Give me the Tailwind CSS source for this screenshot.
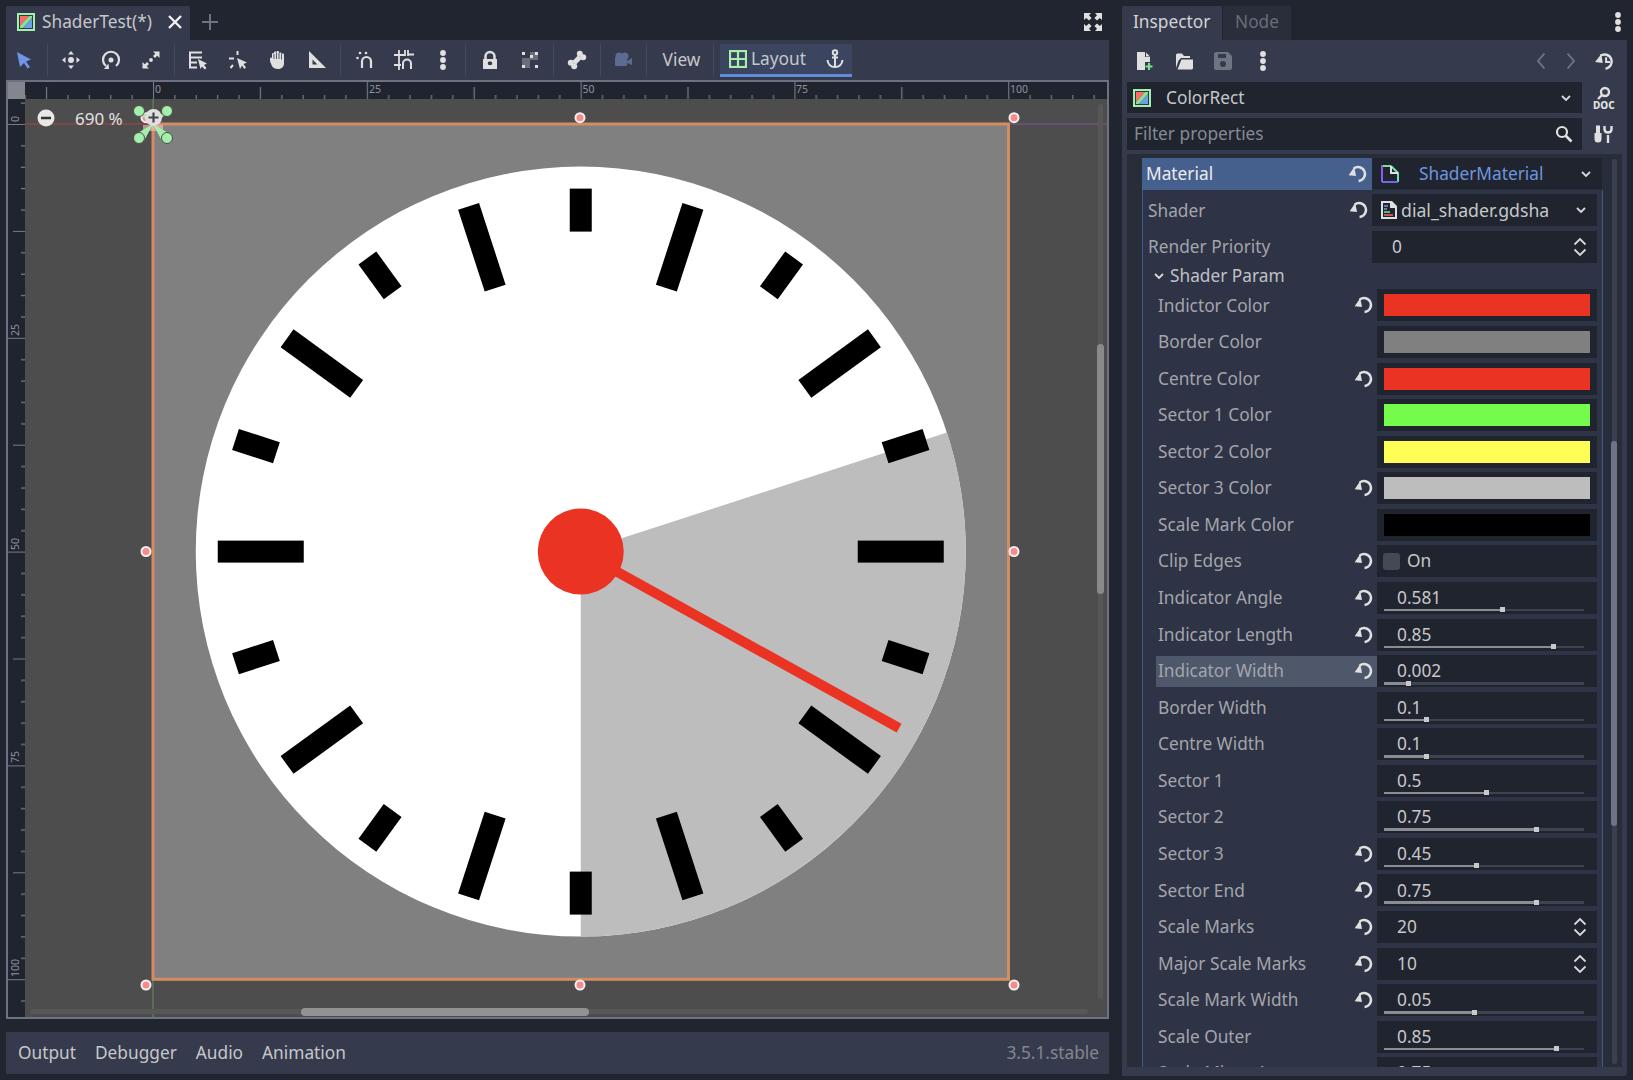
<!DOCTYPE html>
<html><head><meta charset="utf-8"><script src="https://cdn.jsdelivr.net/npm/@tailwindcss/browser@4"></script></head>
<body class="m-0">
<svg width="0" height="0" class="absolute">
<defs>
<symbol id="reset" viewBox="0 0 20 20"><path d="M6 5.200A6.300 6.300 0 1 1 10.500 16.300" fill="none" stroke="#e0e0e0" stroke-width="2.200"/><path d="M1.500 11.200L8.200 11.800L6.600 3.600Z" fill="#e0e0e0"/></symbol>
<symbol id="spin" viewBox="0 0 16 22"><path d="M2.500 8.500L8 3L13.500 8.500M2.500 13.500L8 19L13.500 13.500" fill="none" stroke="#d8d8d8" stroke-width="1.800"/></symbol>
<symbol id="chev" viewBox="0 0 12 12"><path d="M2 4L6 8L10 4" fill="none" stroke="#d8d8d8" stroke-width="1.800"/></symbol>
<symbol id="dots" viewBox="0 0 20 24"><circle cx="10" cy="5" r="2.900" fill="#e0e0e0"/><circle cx="10" cy="12" r="2.900" fill="#e0e0e0"/><circle cx="10" cy="19" r="2.900" fill="#e0e0e0"/></symbol>
<symbol id="crect" viewBox="0 0 18 18"><rect x="1" y="1" width="16" height="16" fill="#2b3a3a" stroke="#a5efac" stroke-width="2"/><path d="M3 3H12L3 13Z" fill="#ff6b6b"/><path d="M12 3H15V5L6 15H3V13Z" fill="#8de08d"/><path d="M15 5V15H6Z" fill="#6ea0e8"/></symbol>
</defs>
</svg>
<div class="relative flex w-[1633px] h-[1080px] overflow-hidden bg-[#21252f] font-['Noto_Sans',sans-serif] text-[17.3px] text-[#c6c7ca]">

<!-- LEFT -->
<div class="ml-[6px] mt-[6px] flex w-[1103px] flex-col">
  <div class="flex h-[34px] items-center">
    <div class="flex h-full w-[184px] items-center rounded-t-[2px] bg-[#353a4d] pb-[3px] pl-[11px]">
      <svg width="18" height="18"><use href="#crect"/></svg>
      <span class="ml-[7px] w-[116px]">ShaderTest(*)</span>
      <svg width="16" height="16" viewBox="0 0 16 16" class="ml-[9px]"><path d="M2 2L14 14M14 2L2 14" stroke="#f0f0f0" stroke-width="2.400"/></svg>
    </div>
    <svg width="18" height="18" viewBox="0 0 18 18" class="mb-[3px] ml-[11px]"><path d="M9 1V17M1 9H17" stroke="#6e7382" stroke-width="2"/></svg>
    <svg width="20" height="20" viewBox="0 0 20 20" class="mb-[3px] ml-auto mr-[6px]"><path d="M1 1H8L6 3.200L8.600 6L6 8.600L3.200 6L1 8ZM19 1H12L14 3.200L11.400 6L14 8.600L16.800 6L19 8ZM1 19H8L6 16.800L8.600 14L6 11.400L3.200 14L1 12ZM19 19H12L14 16.800L11.400 14L14 11.400L16.800 14L19 12Z" fill="#e0e0e0"/></svg>
  </div>
  <!-- toolbar -->
  <div class="flex h-[40px] items-center bg-[#353a4d] text-[#c6c7ca]">
    <div class="flex w-[36px] justify-center"><svg width="20" height="20" viewBox="0 0 20 20"><path d="M3 2L17 9.500L12 11.500L16 17L13.500 18.500L10 13L6 17Z" fill="#6e95e8"/></svg></div>
    <div class="ml-[5px] mr-[3px] h-[32px] w-px bg-[#454b5e]"></div>
    <div class="flex w-[40px] justify-center"><svg width="20" height="20" viewBox="0 0 20 20" fill="#e0e0e0"><path d="M10 1L13 4.500H7ZM10 19L13 15.500H7ZM1 10L4.500 7V13ZM19 10L15.500 7V13Z"/><circle cx="10" cy="10" r="3"/></svg></div>
    <div class="flex w-[40px] justify-center"><svg width="20" height="20" viewBox="0 0 20 20"><path d="M5 16A8 8 0 1 1 15 16" fill="none" stroke="#e0e0e0" stroke-width="2.200"/><circle cx="10" cy="10" r="2.500" fill="#e0e0e0"/><path d="M3 19L8 19L7.500 13.500Z" fill="#e0e0e0"/></svg></div>
    <div class="flex w-[40px] justify-center"><svg width="20" height="20" viewBox="0 0 20 20" fill="#e0e0e0"><path d="M12 1.500H18.500V8L16.200 5.700L14 8L12 6L14.300 3.800Z"/><path d="M8 18.500H1.500V12L3.800 14.300L6 12L8 14L5.700 16.200Z"/><circle cx="10" cy="10" r="1.900"/></svg></div>
    <div class="mx-[3px] h-[32px] w-px bg-[#454b5e]"></div>
    <div class="flex w-[39.750px] justify-center"><svg width="20" height="20" viewBox="0 0 20 20" fill="none" stroke="#e0e0e0" stroke-width="2"><path d="M14 2.500H2V17.500H9M2 7.500H14M2 12.500H9"/><path d="M10 9L19 13.500L16 15L18.500 18L16.800 19.500L14 16.500L12.500 19Z" fill="#e0e0e0" stroke="none"/></svg></div>
    <div class="flex w-[39.750px] justify-center"><svg width="20" height="20" viewBox="0 0 20 20" fill="none" stroke="#e0e0e0" stroke-width="2"><path d="M1 8.500H6M9.500 1V5M5 15L2.500 18"/><path d="M9 8L19 12.500L15.500 14L18 17.500L16.300 19L14 15.500L12 19Z" fill="#e0e0e0" stroke="none"/></svg></div>
    <div class="flex w-[39.750px] justify-center"><svg width="20" height="20" viewBox="0 0 20 20"><path d="M3 11V8.500C3 7 5 7 5 8.500V4C5 2.500 7 2.500 7 4V2.500C7 1 9.500 1 9.500 2.500V2C9.500 .5 12 .5 12 2V3.500C12 2 14.500 2 14.500 3.500V4.500C14.500 3 17 3 17 4.500V13C17 16.500 15 19 11 19C6 19 4.500 16 3 11Z" fill="#e0e0e0"/><path d="M7 4V9M9.500 2.500V9M12 3V9M14.500 4V9.500" stroke="#353a4d" stroke-width=".8"/></svg></div>
    <div class="flex w-[39.750px] justify-center"><svg width="20" height="20" viewBox="0 0 20 20"><path fill-rule="evenodd" d="M2 1L19 18H2ZM5.500 9.500V14.500H10.500Z" fill="#e0e0e0"/></svg></div>
    <div class="mx-[3px] h-[32px] w-px bg-[#454b5e]"></div>
    <div class="ml-[1px] flex w-[39px] justify-center"><svg width="20" height="20" viewBox="0 0 20 20" fill="none" stroke="#e0e0e0" stroke-width="2.200"><path d="M7 18V11.500A4.500 4.500 0 0 1 16 11.500V18"/><circle cx="2.500" cy="8" r="1.300" fill="#e0e0e0" stroke="none"/><circle cx="5" cy="3" r="1.300" fill="#e0e0e0" stroke="none"/><circle cx="11" cy="3" r="1.300" fill="#e0e0e0" stroke="none"/></svg></div>
    <div class="flex w-[39px] justify-center"><svg width="22" height="22" viewBox="0 0 22 22" fill="none" stroke="#e0e0e0" stroke-width="1.800"><path d="M1 6H12M1 16H8M6 1V21M12 1V7"/><path d="M10 20V14.500A4 4 0 0 1 18 14.500V20" stroke-width="2"/><path d="M15 1V7M15 5.500H21"/></svg></div>
    <div class="flex w-[39px] justify-center"><svg width="20" height="24"><use href="#dots"/></svg></div>
    <div class="mx-[3px] h-[32px] w-px bg-[#454b5e]"></div>
    <div class="ml-[1px] flex w-[40px] justify-center"><svg width="20" height="20" viewBox="0 0 20 20"><path d="M5.500 9V6.500A4.500 4.500 0 0 1 14.500 6.500V9" fill="none" stroke="#e0e0e0" stroke-width="2.500"/><path fill-rule="evenodd" d="M3 9H17V19H3ZM10 11.500A1.800 1.800 0 1 0 10 15A1.800 1.800 0 1 0 10 11.500Z" fill="#e0e0e0"/></svg></div>
    <div class="flex w-[40px] justify-center"><svg width="20" height="20" viewBox="0 0 20 20"><path d="M2 8H10V2H18V10H10V18H2Z" fill="#696e7c"/><path d="M2 2H5V5H2ZM15 15H18V18H15ZM2 15H5V18H2ZM15 2H18V5H15ZM10 5H13V8H10Z" fill="#e0e0e0"/></svg></div>
    <div class="mx-[3px] h-[32px] w-px bg-[#454b5e]"></div>
    <div class="flex w-[40px] justify-center"><svg width="20" height="20" viewBox="0 0 20 20"><path d="M13 7L7 13" stroke="#e0e0e0" stroke-width="5"/><circle cx="12.800" cy="3.800" r="3" fill="#e0e0e0"/><circle cx="16.200" cy="7.200" r="3" fill="#e0e0e0"/><circle cx="3.800" cy="12.800" r="3" fill="#e0e0e0"/><circle cx="7.200" cy="16.200" r="3" fill="#e0e0e0"/></svg></div>
    <div class="mx-[3px] h-[32px] w-px bg-[#454b5e]"></div>
    <div class="ml-[-1px] flex w-[40px] justify-center"><svg width="20" height="20" viewBox="0 0 20 20" fill="#5d6b92"><circle cx="6.500" cy="6.500" r="4"/><circle cx="12" cy="6" r="3.500"/><rect x="2" y="7" width="12" height="9" rx="1"/><path d="M14 11L19 8V15L14 13Z"/></svg></div>
    <div class="mx-[3px] h-[32px] w-px bg-[#454b5e]"></div>
    <div class="flex w-[63px] justify-center">View</div>
    <div class="h-[32px] w-px bg-[#454b5e]"></div>
    <div class="ml-[6px] flex h-[33px] w-[132px] items-center border-b-[3px] border-[#5f8ddb] bg-[#3c4560] pl-[9px]">
      <svg width="18" height="18" viewBox="0 0 18 18" fill="none" stroke="#a5efac" stroke-width="2.200"><rect x="1" y="1" width="16" height="16"/><path d="M1 9H17M9 1V17"/></svg>
      <span class="ml-[4px]">Layout</span>
      <svg width="18" height="20" viewBox="0 0 18 20" class="ml-[20px]" fill="none" stroke="#e0e0e0" stroke-width="2"><circle cx="9" cy="3.500" r="2.200"/><path d="M9 6V18M1.500 11C2 15.500 5 18 9 18C13 18 16 15.500 16.500 11M6 8.500H12"/></svg>
    </div>
  </div>
  <!-- viewport -->
  <div class="grid h-[939px] grid-cols-[17px_1fr] grid-rows-[17px_1fr] border-2 border-[#6d7282] bg-[#4d4d4d]">
    <div class="bg-[#83868e]"></div>
    <svg width="1082" height="17" viewBox="25 82 1082 17" class="bg-[#20242f]">
      <defs><pattern id="hr" patternUnits="userSpaceOnUse" x="153" y="82" width="213.800" height="17">
        <path d="M.5 0V17M107.400 5V17M21.880 13V17M43.260 13V17M64.640 13V17M86.020 13V17M128.780 13V17M150.160 13V17M171.540 13V17M192.920 13V17" stroke="#757a88" stroke-width="1.200"/>
      </pattern></defs>
      <rect x="25" y="82" width="1082" height="17" fill="url(#hr)"/>
      <g fill="#8e929c" font-size="10.500"><text x="155" y="93">0</text><text x="369" y="93">25</text><text x="582.500" y="93">50</text><text x="796" y="93">75</text><text x="1010" y="93">100</text></g>
    </svg>
    <svg width="17" height="918" viewBox="8 99 17 918" class="bg-[#20242f]">
      <defs><pattern id="vr" patternUnits="userSpaceOnUse" x="8" y="124" width="17" height="213.800">
        <path d="M0 .5H17M5 107.400H17M13 21.880H17M13 43.260H17M13 64.640H17M13 86.020H17M13 128.780H17M13 150.160H17M13 171.540H17M13 192.920H17" stroke="#757a88" stroke-width="1.200"/>
      </pattern></defs>
      <rect x="8" y="99" width="17" height="918" fill="url(#vr)"/>
      <g fill="#8e929c" font-size="10.500"><text transform="translate(19 122) rotate(-90)">0</text><text transform="translate(19 336) rotate(-90)">25</text><text transform="translate(19 550) rotate(-90)">50</text><text transform="translate(19 763) rotate(-90)">75</text><text transform="translate(19 977) rotate(-90)">100</text></g>
    </svg>
    <div class="relative overflow-hidden">
      <svg width="1082" height="918" viewBox="25 99 1082 918" class="absolute left-0 top-0">
        <path d="M25 124H153" stroke="#b04040" stroke-width="1"/><path d="M1009 124H1107" stroke="#8d4f9a" stroke-width="1"/><path d="M153 99V124M153 980V1017" stroke="#64915f" stroke-width="1"/>
        <rect x="153" y="124" width="855.500" height="855.300" fill="#808080" stroke="#d48c63" stroke-width="3"/>
        <g transform="translate(580.750 551.600)">
          <circle r="385" fill="#fff"/>
          <path d="M0 0L366.200 -119A385 385 0 0 1 0 385Z" fill="#bdbdbd"/>
          <g fill="#000">
            <rect x="-11" y="-363" width="22" height="43"/><rect x="-11" y="-363" width="22" height="86" transform="rotate(18)"/><rect x="-11" y="-363" width="22" height="43" transform="rotate(36)"/><rect x="-11" y="-363" width="22" height="86" transform="rotate(54)"/><rect x="-11" y="-363" width="22" height="43" transform="rotate(72)"/><rect x="-11" y="-363" width="22" height="86" transform="rotate(90)"/><rect x="-11" y="-363" width="22" height="43" transform="rotate(108)"/><rect x="-11" y="-363" width="22" height="86" transform="rotate(126)"/><rect x="-11" y="-363" width="22" height="43" transform="rotate(144)"/><rect x="-11" y="-363" width="22" height="86" transform="rotate(162)"/><rect x="-11" y="-363" width="22" height="43" transform="rotate(180)"/><rect x="-11" y="-363" width="22" height="86" transform="rotate(198)"/><rect x="-11" y="-363" width="22" height="43" transform="rotate(216)"/><rect x="-11" y="-363" width="22" height="86" transform="rotate(234)"/><rect x="-11" y="-363" width="22" height="43" transform="rotate(252)"/><rect x="-11" y="-363" width="22" height="86" transform="rotate(270)"/><rect x="-11" y="-363" width="22" height="43" transform="rotate(288)"/><rect x="-11" y="-363" width="22" height="86" transform="rotate(306)"/><rect x="-11" y="-363" width="22" height="43" transform="rotate(324)"/><rect x="-11" y="-363" width="22" height="86" transform="rotate(342)"/>
          </g>
          <rect x="-5" y="-364" width="10" height="364" fill="#eb3324" transform="rotate(119)"/>
          <circle r="43" fill="#eb3324"/>
        </g>
        <g fill="#f98a8a" stroke="#f2f2f2" stroke-width="2"><circle cx="146" cy="551.500" r="4.500"/><circle cx="146" cy="985" r="4.500"/><circle cx="580" cy="117.700" r="4.500"/><circle cx="580" cy="985" r="4.500"/><circle cx="1014" cy="117.700" r="4.500"/><circle cx="1014" cy="551.500" r="4.500"/><circle cx="1014" cy="985" r="4.500"/><circle cx="146" cy="117.700" r="4.500"/></g>
        <rect x="143" y="125" width="20" height="6" fill="#f8c8c8" opacity=".6"/>
        <path d="M153 124L135.500 107.500L142.500 114.500ZM153 124L170.500 107.500L163.500 114.500Z" stroke="#a5efac" stroke-width="1"/>
        <path d="M153 124L136 134L144 141ZM153 124L170 134L162 141Z" fill="#a5efac"/>
        <path d="M153 124L139 111M153 124L167 111" stroke="#a5efac" stroke-width="3"/>
        <g fill="#a5efac" stroke="#4a4f4a" stroke-width="1"><circle cx="139" cy="111" r="5.500"/><circle cx="167" cy="111" r="5.500"/><circle cx="139" cy="138" r="5.500"/><circle cx="167" cy="138" r="5.500"/></g>
        <circle cx="46" cy="118" r="8.500" fill="#e8e8e8"/><path d="M41 118H51" stroke="#333" stroke-width="2.500"/>
        <circle cx="153.500" cy="117.500" r="8.500" fill="#e0e0e0"/><path d="M148.500 117.500H158.500M153.500 112.500V122.500" stroke="#444" stroke-width="2.200"/>
        <rect x="30" y="1009" width="1058" height="5" rx="2.500" fill="#575757"/>
        <rect x="301" y="1008" width="288" height="8" rx="4" fill="#929292"/>
        <rect x="1098" y="104" width="5" height="895" rx="2.500" fill="#575757"/>
        <rect x="1097" y="344" width="7" height="250" rx="3.500" fill="#8a8a8a"/>
      </svg>
      <div class="absolute left-[50px] top-[7px] text-[17px] text-[#e2e2e2]">690 %</div>
    </div>
  </div>
  <!-- bottom bar -->
  <div class="mt-[13px] flex h-[42px] items-center bg-[#353a4d] pl-[12px] pr-[10px]">
    <span>Output</span><span class="ml-[19px]">Debugger</span><span class="ml-[19px]">Audio</span><span class="ml-[19px]">Animation</span>
    <span class="ml-auto text-[#84878f]">3.5.1.stable</span>
  </div>
</div>

<!-- RIGHT -->
<div class="ml-[13px] mt-[6px] flex w-[505px] flex-col">
  <div class="flex h-[34px] items-center">
    <div class="flex h-full w-[100px] items-center rounded-t-[2px] bg-[#353a4d] pb-[3px] pl-[11px] text-[#d2d3d6]">Inspector</div>
    <div class="ml-[1px] flex h-full w-[68px] items-center bg-[#2a2e3b] pb-[3px] pl-[12px] text-[#676c7a]">Node</div>
    <svg width="20" height="24" class="mb-[3px] ml-auto mr-[-1px]"><use href="#dots"/></svg>
  </div>
  <div class="flex h-[1036px] flex-col rounded-br-[4px] bg-[#353a4d] pl-[5px]">
    <div class="flex h-[42px] items-center">
      <div class="flex w-[34px] justify-center"><svg width="20" height="20" viewBox="0 0 20 20"><path d="M3 1H11V6H16V11H11V19H3Z" fill="#e0e0e0"/><path d="M12 1.500L16 5.500H12Z" fill="#e0e0e0"/><path d="M15 12V19M11.500 15.500H18.500" stroke="#7de08d" stroke-width="2.200"/></svg></div>
      <div class="ml-[3px] flex w-[40px] justify-center"><svg width="20" height="20" viewBox="0 0 20 20"><path d="M2 17V4C2 3 3 2.500 4 2.500H8L10 5H16V7H7L4.500 9.500L2 17Z" fill="#e0e0e0"/><path d="M7.500 8.500H19V17C19 18 18 18.500 17 18.500H3.500Z" fill="#e0e0e0"/></svg></div>
      <div class="ml-[-1px] flex w-[40px] justify-center"><svg width="20" height="20" viewBox="0 0 20 20"><path fill-rule="evenodd" d="M1 3C1 2 2 1 3 1H15L19 5V17C19 18 18 19 17 19H3C2 19 1 18 1 17ZM5 3V7H13V3ZM10 10A3 3 0 1 0 10 16A3 3 0 1 0 10 10Z" fill="#6f7482"/></svg></div>
      <div class="flex w-[40px] justify-center"><svg width="20" height="24"><use href="#dots"/></svg></div>
      <svg width="12" height="18" viewBox="0 0 12 18" class="ml-[252px]"><path d="M9.500 1.500L3 9L9.500 16.500" fill="none" stroke="#727785" stroke-width="1.800"/></svg>
      <svg width="12" height="18" viewBox="0 0 12 18" class="ml-[18px]"><path d="M2.500 1.500L9 9L2.500 16.500" fill="none" stroke="#727785" stroke-width="1.800"/></svg>
      <svg width="22" height="22" viewBox="0 0 20 20" class="ml-[17px]"><path d="M5.800 5.300A6.500 6.500 0 1 1 10.500 17" fill="none" stroke="#e0e0e0" stroke-width="2.200"/><path d="M1 11L8 11.800L6.500 3.800Z" fill="#e0e0e0"/><path d="M11 6.500V11H14.500" fill="none" stroke="#e0e0e0" stroke-width="1.800"/></svg>
    </div>
    <div class="flex h-[31px] items-center">
      <div class="flex h-full w-[455px] items-center bg-[#20242f] pl-[6px] pr-[10px]">
        <svg width="18" height="18"><use href="#crect"/></svg>
        <span class="ml-[15px]">ColorRect</span>
        <svg width="12" height="12" class="ml-auto"><use href="#chev"/></svg>
      </div>
      <svg width="22" height="24" viewBox="0 0 22 24" class="ml-[11px]"><circle cx="12" cy="6" r="4" fill="none" stroke="#e0e0e0" stroke-width="2.400"/><path d="M9 9L5 13" stroke="#e0e0e0" stroke-width="2.400"/><text x="0" y="22.500" font-size="10" font-weight="800" fill="#e0e0e0" font-family="Noto Sans">DOC</text></svg>
    </div>
    <div class="mt-[5px] flex h-[32px] items-center">
      <div class="flex h-full w-[455px] items-center bg-[#20242f] pl-[7px] pr-[9px] text-[#868a94]">
        <span>Filter properties</span>
        <svg width="18" height="18" viewBox="0 0 18 18" class="ml-auto"><circle cx="7" cy="7" r="5" fill="none" stroke="#e0e0e0" stroke-width="2.200"/><path d="M10.500 10.500L16.500 16.500" stroke="#e0e0e0" stroke-width="2.600"/></svg>
      </div>
      <svg width="20" height="20" viewBox="0 0 20 20" class="ml-[12px]"><path d="M2 1.500H6V9H7.500V15A3.500 3.500 0 0 1 .5 15V9H2Z" fill="#e0e0e0"/><path d="M14 11V19M10.500 2V5C10.500 7 12 8.500 14 8.500C16 8.500 17.500 7 17.500 5V2" fill="none" stroke="#e0e0e0" stroke-width="2.400"/></svg>
    </div>
    <!-- tree -->
    <div class="relative mt-[4px] h-[913px] w-[495px] overflow-hidden bg-[#282d3a] pl-[15px] pt-[4px]">
      <div class="absolute left-[485px] top-[5px] h-[905px] w-[5px] rounded-full bg-[#3a4052]"></div>
      <div class="absolute left-[484px] top-[287px] h-[385px] w-[6px] rounded-full bg-[#6e7385]"></div>
      <div class="flex h-[32px] w-[460px]">
        <div class="flex w-[230px] items-center bg-[#46608e] pl-[4px] text-[#ececec]"><span>Material</span><svg width="22" height="22" class="ml-auto mr-[3px]"><use href="#reset"/></svg></div>
        <div class="flex h-[31px] w-[230px] items-center bg-[#20242f] pl-[8px] pr-[10px]">
          <svg width="20" height="20" viewBox="0 0 20 20" fill="none" stroke-width="2"><path d="M2 2H11" stroke="#7de08d"/><path d="M11 2L18 9V18" stroke="#7de0a8"/><path d="M11 2V9H18" stroke="#e0e0e0"/><path d="M2 18H18" stroke="#6a6ae8"/><path d="M2 1V18" stroke="#8a5cf0"/></svg>
          <span class="ml-[19px] text-[#6f94de]">ShaderMaterial</span>
          <svg width="12" height="12" class="ml-auto"><use href="#chev"/></svg>
        </div>
      </div>
      <div class="h-[900px] w-[461px] border-x border-[#3e5a8a] bg-[#2e3346] pt-[2.200px] text-[#a3a5ab]">
        <div class="flex h-[36.570px] items-center">
          <div class="flex w-[229px] items-center pl-[5px]"><span>Shader</span><svg width="22" height="22" class="ml-auto mr-[2px]"><use href="#reset"/></svg></div>
          <div class="flex h-[32px] w-[225px] items-center bg-[#20242f] pl-[8px] pr-[10px] text-[#c6c7ca]">
            <svg width="18" height="20" viewBox="0 0 18 20"><path fill-rule="evenodd" d="M1 1H12L17 6V19H1ZM3 3V17H15V8H10V3Z" fill="#e0e0e0"/><path d="M4 6H8M4 9H7" stroke="#6ea0e8" stroke-width="1.500"/><path d="M4 12H10" stroke="#7de08d" stroke-width="1.500"/><path d="M4 15H13" stroke="#f06a6a" stroke-width="1.500"/></svg>
            <span class="ml-[3px] text-[17.700px]">dial_shader.gdsha</span>
            <svg width="12" height="12" class="ml-auto"><use href="#chev"/></svg>
          </div>
        </div>
        <div class="flex h-[36.570px] items-center">
          <div class="w-[229px] pl-[5px]">Render Priority</div>
          <div class="flex h-[32px] w-[225px] items-center bg-[#20242f] pl-[20px] pr-[9px] text-[#c6c7ca]"><span>0</span><svg width="16" height="22" class="ml-auto"><use href="#spin"/></svg></div>
        </div>
        <div class="flex h-[21.900px] items-center pl-[10px] text-[#c0c1c5]"><svg width="12" height="12"><use href="#chev"/></svg><span class="ml-[5px]">Shader Param</span></div>

        <div class="flex h-[36.570px] items-center"><div class="flex h-[31px] w-[234px] items-center pl-[15px]"><span>Indictor Color</span><svg width="22" height="22" class="ml-auto mr-[2px]"><use href="#reset"/></svg></div><div class="flex h-[32px] w-[220px] items-center bg-[#20242f] pl-[7px]"><div class="h-[22px] w-[206px] bg-[#eb3324]"></div></div></div>
        <div class="flex h-[36.570px] items-center"><div class="flex h-[31px] w-[234px] items-center pl-[15px]"><span>Border Color</span></div><div class="flex h-[32px] w-[220px] items-center bg-[#20242f] pl-[7px]"><div class="h-[22px] w-[206px] bg-[#808080]"></div></div></div>
        <div class="flex h-[36.570px] items-center"><div class="flex h-[31px] w-[234px] items-center pl-[15px]"><span>Centre Color</span><svg width="22" height="22" class="ml-auto mr-[2px]"><use href="#reset"/></svg></div><div class="flex h-[32px] w-[220px] items-center bg-[#20242f] pl-[7px]"><div class="h-[22px] w-[206px] bg-[#eb3324]"></div></div></div>
        <div class="flex h-[36.570px] items-center"><div class="flex h-[31px] w-[234px] items-center pl-[15px]"><span>Sector 1 Color</span></div><div class="flex h-[32px] w-[220px] items-center bg-[#20242f] pl-[7px]"><div class="h-[22px] w-[206px] bg-[#75fb4c]"></div></div></div>
        <div class="flex h-[36.570px] items-center"><div class="flex h-[31px] w-[234px] items-center pl-[15px]"><span>Sector 2 Color</span></div><div class="flex h-[32px] w-[220px] items-center bg-[#20242f] pl-[7px]"><div class="h-[22px] w-[206px] bg-[#fffe54]"></div></div></div>
        <div class="flex h-[36.570px] items-center"><div class="flex h-[31px] w-[234px] items-center pl-[15px]"><span>Sector 3 Color</span><svg width="22" height="22" class="ml-auto mr-[2px]"><use href="#reset"/></svg></div><div class="flex h-[32px] w-[220px] items-center bg-[#20242f] pl-[7px]"><div class="h-[22px] w-[206px] bg-[#bdbdbd]"></div></div></div>
        <div class="flex h-[36.570px] items-center"><div class="flex h-[31px] w-[234px] items-center pl-[15px]"><span>Scale Mark Color</span></div><div class="flex h-[32px] w-[220px] items-center bg-[#20242f] pl-[7px]"><div class="h-[22px] w-[206px] bg-black"></div></div></div>
        <div class="flex h-[36.570px] items-center"><div class="flex h-[31px] w-[234px] items-center pl-[15px]"><span>Clip Edges</span><svg width="22" height="22" class="ml-auto mr-[2px]"><use href="#reset"/></svg></div><div class="flex h-[32px] w-[220px] items-center bg-[#20242f] pl-[6px] text-[#c6c7ca]"><div class="h-[17px] w-[17px] rounded-[3px] bg-[#454956]"></div><span class="ml-[7px]">On</span></div></div>

        <div class="flex h-[36.570px] items-center"><div class="flex h-[31px] w-[234px] items-center pl-[15px]"><span>Indicator Angle</span><svg width="22" height="22" class="ml-auto mr-[2px]"><use href="#reset"/></svg></div><div class="relative flex h-[32px] w-[220px] items-center bg-[#20242f] pl-[20px] text-[#c6c7ca]"><span>0.581</span><div class="absolute left-[7px] top-[27px] h-[2.500px] w-[200px] bg-[#3f4350]"><div class="relative h-full w-[119px] bg-[#8c8d92]"><div class="absolute right-[-2px] top-[-1.500px] h-[5px] w-[5px] bg-[#c9c9c9]"></div></div></div></div></div>
        <div class="flex h-[36.570px] items-center"><div class="flex h-[31px] w-[234px] items-center pl-[15px]"><span>Indicator Length</span><svg width="22" height="22" class="ml-auto mr-[2px]"><use href="#reset"/></svg></div><div class="relative flex h-[32px] w-[220px] items-center bg-[#20242f] pl-[20px] text-[#c6c7ca]"><span>0.85</span><div class="absolute left-[7px] top-[27px] h-[2.500px] w-[200px] bg-[#3f4350]"><div class="relative h-full w-[170px] bg-[#8c8d92]"><div class="absolute right-[-2px] top-[-1.500px] h-[5px] w-[5px] bg-[#c9c9c9]"></div></div></div></div></div>
        <div class="flex h-[36.570px] items-center"><div class="ml-[13px] flex h-[31px] w-[221px] items-center bg-[#4f586b] pl-[2px]"><span>Indicator Width</span><svg width="22" height="22" class="ml-auto mr-[2px]"><use href="#reset"/></svg></div><div class="relative flex h-[32px] w-[220px] items-center bg-[#20242f] pl-[20px] text-[#c6c7ca]"><span>0.002</span><div class="absolute left-[7px] top-[27px] h-[2.500px] w-[200px] bg-[#3f4350]"><div class="relative h-full w-[25px] bg-[#8c8d92]"><div class="absolute right-[-2px] top-[-1.500px] h-[5px] w-[5px] bg-[#c9c9c9]"></div></div></div></div></div>
        <div class="flex h-[36.570px] items-center"><div class="flex h-[31px] w-[234px] items-center pl-[15px]"><span>Border Width</span></div><div class="relative flex h-[32px] w-[220px] items-center bg-[#20242f] pl-[20px] text-[#c6c7ca]"><span>0.1</span><div class="absolute left-[7px] top-[27px] h-[2.500px] w-[200px] bg-[#3f4350]"><div class="relative h-full w-[43px] bg-[#8c8d92]"><div class="absolute right-[-2px] top-[-1.500px] h-[5px] w-[5px] bg-[#c9c9c9]"></div></div></div></div></div>
        <div class="flex h-[36.570px] items-center"><div class="flex h-[31px] w-[234px] items-center pl-[15px]"><span>Centre Width</span></div><div class="relative flex h-[32px] w-[220px] items-center bg-[#20242f] pl-[20px] text-[#c6c7ca]"><span>0.1</span><div class="absolute left-[7px] top-[27px] h-[2.500px] w-[200px] bg-[#3f4350]"><div class="relative h-full w-[43px] bg-[#8c8d92]"><div class="absolute right-[-2px] top-[-1.500px] h-[5px] w-[5px] bg-[#c9c9c9]"></div></div></div></div></div>
        <div class="flex h-[36.570px] items-center"><div class="flex h-[31px] w-[234px] items-center pl-[15px]"><span>Sector 1</span></div><div class="relative flex h-[32px] w-[220px] items-center bg-[#20242f] pl-[20px] text-[#c6c7ca]"><span>0.5</span><div class="absolute left-[7px] top-[27px] h-[2.500px] w-[200px] bg-[#3f4350]"><div class="relative h-full w-[103px] bg-[#8c8d92]"><div class="absolute right-[-2px] top-[-1.500px] h-[5px] w-[5px] bg-[#c9c9c9]"></div></div></div></div></div>
        <div class="flex h-[36.570px] items-center"><div class="flex h-[31px] w-[234px] items-center pl-[15px]"><span>Sector 2</span></div><div class="relative flex h-[32px] w-[220px] items-center bg-[#20242f] pl-[20px] text-[#c6c7ca]"><span>0.75</span><div class="absolute left-[7px] top-[27px] h-[2.500px] w-[200px] bg-[#3f4350]"><div class="relative h-full w-[153px] bg-[#8c8d92]"><div class="absolute right-[-2px] top-[-1.500px] h-[5px] w-[5px] bg-[#c9c9c9]"></div></div></div></div></div>
        <div class="flex h-[36.570px] items-center"><div class="flex h-[31px] w-[234px] items-center pl-[15px]"><span>Sector 3</span><svg width="22" height="22" class="ml-auto mr-[2px]"><use href="#reset"/></svg></div><div class="relative flex h-[32px] w-[220px] items-center bg-[#20242f] pl-[20px] text-[#c6c7ca]"><span>0.45</span><div class="absolute left-[7px] top-[27px] h-[2.500px] w-[200px] bg-[#3f4350]"><div class="relative h-full w-[93px] bg-[#8c8d92]"><div class="absolute right-[-2px] top-[-1.500px] h-[5px] w-[5px] bg-[#c9c9c9]"></div></div></div></div></div>
        <div class="flex h-[36.570px] items-center"><div class="flex h-[31px] w-[234px] items-center pl-[15px]"><span>Sector End</span><svg width="22" height="22" class="ml-auto mr-[2px]"><use href="#reset"/></svg></div><div class="relative flex h-[32px] w-[220px] items-center bg-[#20242f] pl-[20px] text-[#c6c7ca]"><span>0.75</span><div class="absolute left-[7px] top-[27px] h-[2.500px] w-[200px] bg-[#3f4350]"><div class="relative h-full w-[153px] bg-[#8c8d92]"><div class="absolute right-[-2px] top-[-1.500px] h-[5px] w-[5px] bg-[#c9c9c9]"></div></div></div></div></div>
        <div class="flex h-[36.570px] items-center"><div class="flex h-[31px] w-[234px] items-center pl-[15px]"><span>Scale Marks</span><svg width="22" height="22" class="ml-auto mr-[2px]"><use href="#reset"/></svg></div><div class="flex h-[32px] w-[220px] items-center bg-[#20242f] pl-[20px] pr-[9px] text-[#c6c7ca]"><span>20</span><svg width="16" height="22" class="ml-auto"><use href="#spin"/></svg></div></div>
        <div class="flex h-[36.570px] items-center"><div class="flex h-[31px] w-[234px] items-center pl-[15px]"><span>Major Scale Marks</span><svg width="22" height="22" class="ml-auto mr-[2px]"><use href="#reset"/></svg></div><div class="flex h-[32px] w-[220px] items-center bg-[#20242f] pl-[20px] pr-[9px] text-[#c6c7ca]"><span>10</span><svg width="16" height="22" class="ml-auto"><use href="#spin"/></svg></div></div>
        <div class="flex h-[36.570px] items-center"><div class="flex h-[31px] w-[234px] items-center pl-[15px]"><span>Scale Mark Width</span><svg width="22" height="22" class="ml-auto mr-[2px]"><use href="#reset"/></svg></div><div class="relative flex h-[32px] w-[220px] items-center bg-[#20242f] pl-[20px] text-[#c6c7ca]"><span>0.05</span><div class="absolute left-[7px] top-[27px] h-[2.500px] w-[200px] bg-[#3f4350]"><div class="relative h-full w-[91px] bg-[#8c8d92]"><div class="absolute right-[-2px] top-[-1.500px] h-[5px] w-[5px] bg-[#c9c9c9]"></div></div></div></div></div>
        <div class="flex h-[36.570px] items-center"><div class="flex h-[31px] w-[234px] items-center pl-[15px]"><span>Scale Outer</span></div><div class="relative flex h-[32px] w-[220px] items-center bg-[#20242f] pl-[20px] text-[#c6c7ca]"><span>0.85</span><div class="absolute left-[7px] top-[27px] h-[2.500px] w-[200px] bg-[#3f4350]"><div class="relative h-full w-[173px] bg-[#8c8d92]"><div class="absolute right-[-2px] top-[-1.500px] h-[5px] w-[5px] bg-[#c9c9c9]"></div></div></div></div></div>
        <div class="flex h-[36.570px] items-center"><div class="flex h-[31px] w-[234px] items-center pl-[15px]"><span>Scale Minor 1</span></div><div class="relative flex h-[32px] w-[220px] items-center bg-[#20242f] pl-[20px] text-[#c6c7ca]"><span>0.75</span></div></div>
      </div>
    </div>
  </div>
</div>
</div>
</body></html>
